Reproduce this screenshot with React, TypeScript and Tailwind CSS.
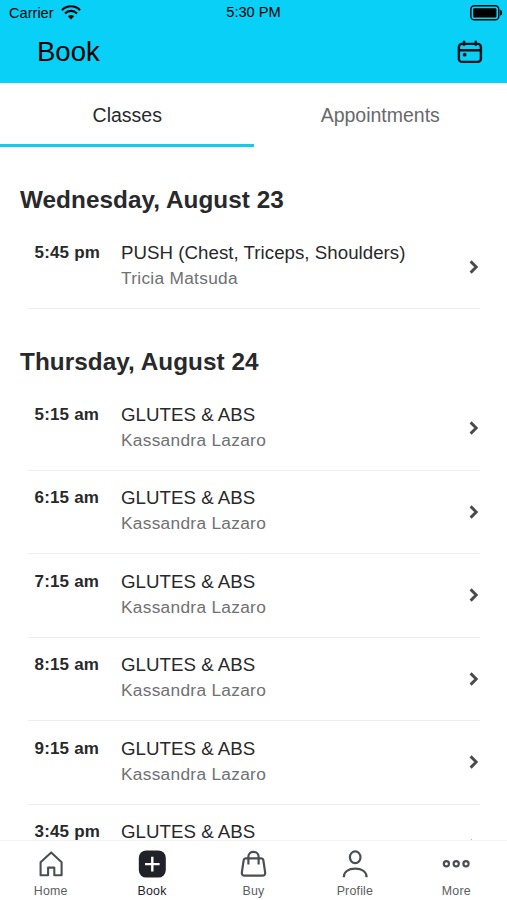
import type { ReactNode } from "react";

type ClassItem = { time: string; title: string; coach: string };

const days: { label: string; classes: ClassItem[] }[] = [
  {
    label: "Wednesday, August 23",
    classes: [{ time: "5:45 pm", title: "PUSH (Chest, Triceps, Shoulders)", coach: "Tricia Matsuda" }],
  },
  {
    label: "Thursday, August 24",
    classes: [
      { time: "5:15 am", title: "GLUTES & ABS", coach: "Kassandra Lazaro" },
      { time: "6:15 am", title: "GLUTES & ABS", coach: "Kassandra Lazaro" },
      { time: "7:15 am", title: "GLUTES & ABS", coach: "Kassandra Lazaro" },
      { time: "8:15 am", title: "GLUTES & ABS", coach: "Kassandra Lazaro" },
      { time: "9:15 am", title: "GLUTES & ABS", coach: "Kassandra Lazaro" },
      { time: "3:45 pm", title: "GLUTES & ABS", coach: "Kassandra Lazaro" },
    ],
  },
];

function WifiIcon() {
  return (
    <svg width="20" height="15" viewBox="0 0 20 15" fill="none" stroke="#000" strokeWidth="2.1">
      <path d="M0.9 5.2C6 0 14 0 19.1 5.2" />
      <path d="M4 8.4c3.4-3.4 8.6-3.4 12 0" />
      <path d="M10 14.4L6.9 11.3c1.8-1.7 4.4-1.7 6.2 0z" fill="#000" stroke="none" />
    </svg>
  );
}

function BatteryIcon() {
  return (
    <svg width="33" height="16" viewBox="0 0 33 16" fill="none">
      <rect x="0.8" y="0.8" width="28" height="14" rx="3.6" stroke="#000" strokeWidth="1.4" />
      <rect x="3.2" y="3.2" width="23.2" height="9.2" rx="1.2" fill="#000" />
      <path d="M30.2 4.8c2.6.6 2.6 5.4 0 6z" fill="#000" />
    </svg>
  );
}

function CalendarIcon() {
  return (
    <svg width="26" height="24" viewBox="0 0 26 24" fill="none" stroke="#06131a" strokeWidth="2.4">
      <rect x="1.9" y="3.9" width="22" height="18" rx="3" />
      <path d="M2 10.2h22M7 0.8v5M18.8 0.8v5" />
      <circle cx="7.6" cy="14.7" r="1.9" fill="#06131a" stroke="none" />
    </svg>
  );
}

function Chevron() {
  return (
    <svg className="mr-[1.5px] shrink-0" width="10" height="14" viewBox="0 0 10 14" fill="none" stroke="#4a4b4d" strokeWidth="2.9">
      <path d="M1.6 1.4L7.2 7l-5.6 5.6" />
    </svg>
  );
}

const tabs: { label: string; active?: boolean; icon: ReactNode }[] = [
  {
    label: "Home",
    icon: (
      <svg width="28" height="28" viewBox="0 0 28 28" fill="none" stroke="#4b4f54" strokeWidth="2.1">
        <path d="M3.6 12.2L14.2 2.4l10.4 9.8v13H17.3v-7.6h-6.2v7.6H3.6z" strokeLinejoin="round" />
      </svg>
    ),
  },
  {
    label: "Book",
    active: true,
    icon: (
      <svg width="28" height="28" viewBox="0 0 28 28" fill="none">
        <rect x="0.8" y="0.4" width="27" height="27.2" rx="7.5" fill="#1f2226" />
        <path d="M14.3 6.8v14.6M7 14.1h14.6" stroke="#fff" strokeWidth="2.4" />
      </svg>
    ),
  },
  {
    label: "Buy",
    icon: (
      <svg width="28" height="28" viewBox="0 0 28 28" fill="none" stroke="#4b4f54" strokeWidth="2.2">
        <path d="M6.6 8.4h15.8q1.6 0 1.9 1.6l1.8 12.2q.4 3.5-2.8 3.5H5.7q-3.2 0-2.8-3.5l1.8-12.2q.3-1.6 1.9-1.6z" />
        <path d="M9.4 14.4V6.6c0-6.4 10.2-6.4 10.2 0v7.8" />
      </svg>
    ),
  },
  {
    label: "Profile",
    icon: (
      <svg width="28" height="28" viewBox="0 0 28 28" fill="none" stroke="#4b4f54" strokeWidth="2.2">
        <ellipse cx="14.2" cy="7.3" rx="5.3" ry="5.9" />
        <path d="M2.8 27.2c0-5.6 4.8-8.6 11.4-8.6s11.4 3 11.4 8.6" />
      </svg>
    ),
  },
  {
    label: "More",
    icon: (
      <svg width="28" height="28" viewBox="0 0 28 28" fill="none" stroke="#4b4f54" strokeWidth="2.2">
        <circle cx="4.4" cy="13.8" r="2.6" />
        <circle cx="14.2" cy="13.8" r="2.6" />
        <circle cx="24" cy="13.8" r="2.6" />
      </svg>
    ),
  },
];

function ClassRow({ item }: { item: ClassItem }) {
  return (
    <div className="ml-7 mr-[27px] flex h-[83.5px] items-center border-b border-[#ededee]">
      <div className="w-[93px] self-start pl-[6.5px] pt-[15.5px] text-[17px] leading-6 font-bold tracking-[0.18px]">{item.time}</div>
      <div className="flex-1 self-start pt-[15.5px]">
        <div className="text-[18.7px] leading-6 tracking-[0.03px]">{item.title}</div>
        <div className="mt-px text-[17.3px] leading-6 tracking-[0.3px] text-[#707174]">{item.coach}</div>
      </div>
      <Chevron />
    </div>
  );
}

export default function App() {
  return (
    <div className="flex h-[900px] w-[507px] flex-col overflow-hidden bg-white font-['Liberation_Sans',Arial,sans-serif] text-[#28292b]">
      <header className="h-[83px] shrink-0 bg-[#08d0f6] text-black">
        <div className="grid h-[25px] grid-cols-3 items-center text-[14.6px] leading-5">
          <div className="flex items-center gap-[7px] pl-[9px]">
            <span>Carrier</span>
            <WifiIcon />
          </div>
          <div className="pb-px text-center">5:30 PM</div>
          <div className="flex justify-end pr-1">
            <BatteryIcon />
          </div>
        </div>
        <div className="flex h-[54px] items-center justify-between pl-[37px] pr-6">
          <h1 className="text-[27.5px] leading-8">Book</h1>
          <CalendarIcon />
        </div>
      </header>

      <nav className="grid h-16 shrink-0 grid-cols-2 text-center text-[19.5px]">
        <div className="border-b-[3px] border-[#13cbea] pt-[18px] pl-px leading-7">Classes</div>
        <div className="pt-[18px] leading-7 text-[#68696c]">Appointments</div>
      </nav>

      <main className="min-h-0 flex-1 overflow-hidden pt-[0.5px]">
        {days.map((day) => (
          <section key={day.label}>
            <h2 className="flex h-[78px] items-end pb-[10.5px] pl-5 text-[24.3px] leading-[30px] font-bold tracking-[0.05px]">{day.label}</h2>
            {day.classes.map((item) => (
              <ClassRow key={item.time} item={item} />
            ))}
          </section>
        ))}
      </main>

      <footer className="grid h-[60px] shrink-0 grid-cols-5 border-t border-[#f3f3f3] bg-white">
        {tabs.map((tab) => (
          <div key={tab.label} className="flex flex-col items-center pt-[9px]">
            {tab.icon}
            <span className={tab.active ? "mt-[5px] text-[12.4px] leading-4 tracking-[0.2px] text-[#222327]" : "mt-[5px] text-[12.4px] leading-4 tracking-[0.2px] text-[#5b5e62]"}>
              {tab.label}
            </span>
          </div>
        ))}
      </footer>
    </div>
  );
}
